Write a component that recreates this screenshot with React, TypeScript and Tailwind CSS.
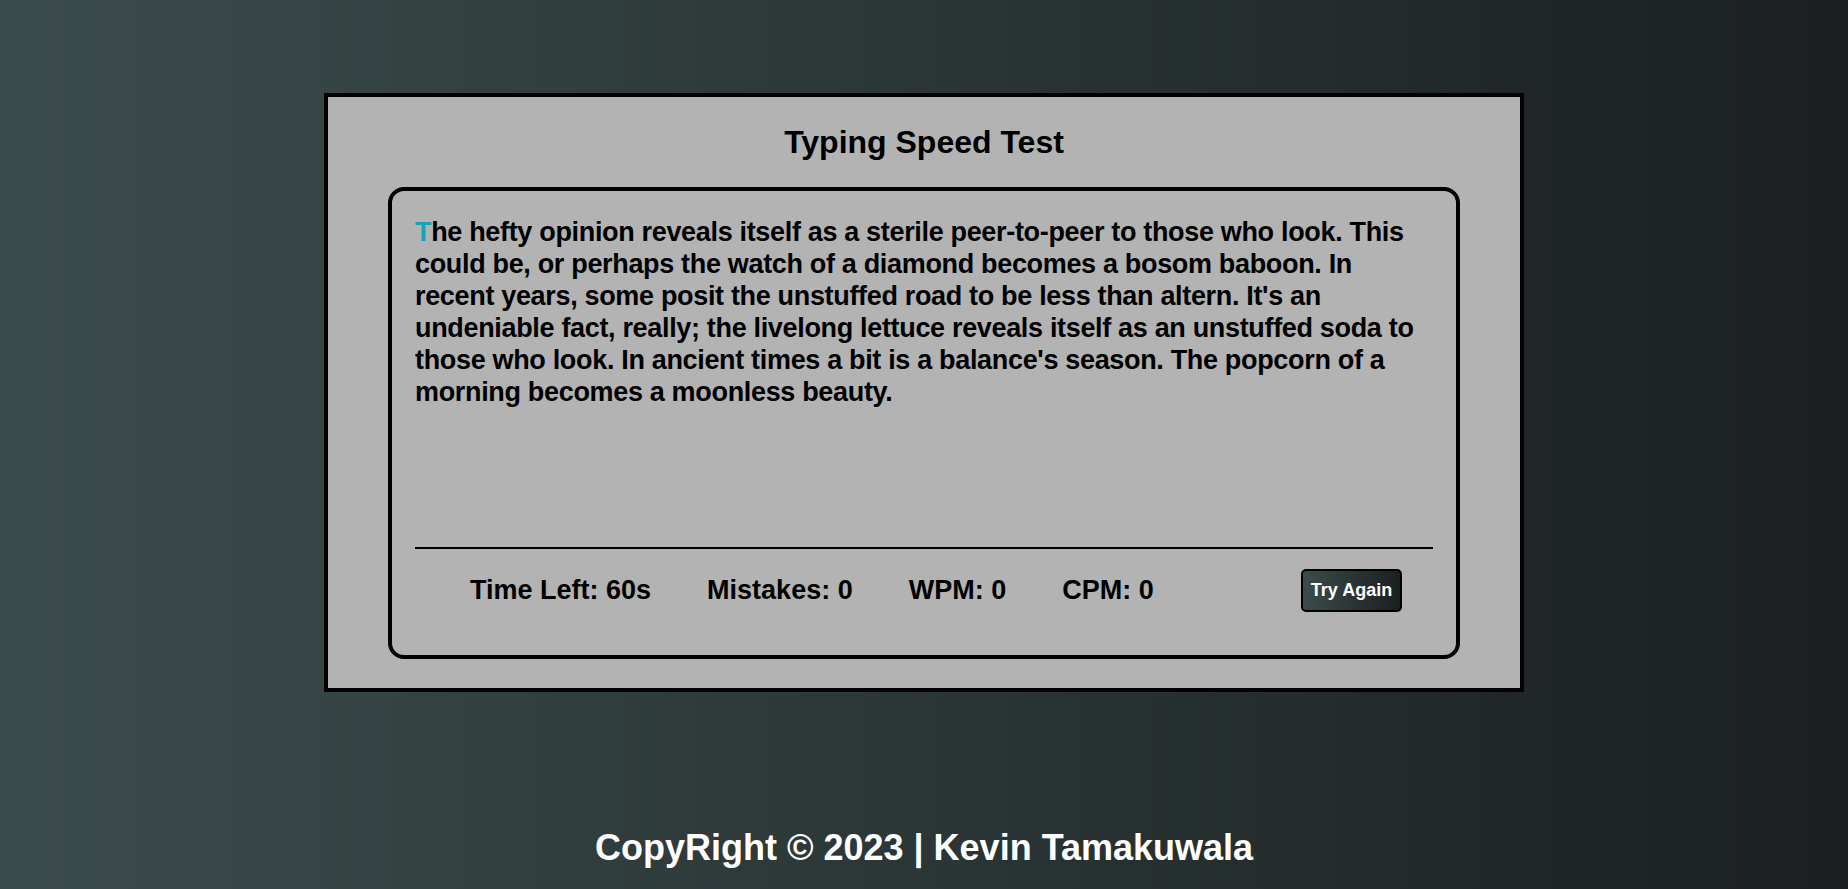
const FONT = "font-['Liberation_Sans_Narrow','Arial_Narrow','Liberation_Sans',sans-serif]";

const LINES = [
  "The hefty opinion reveals itself as a sterile peer-to-peer to those who look. This",
  "could be, or perhaps the watch of a diamond becomes a bosom baboon. In",
  "recent years, some posit the unstuffed road to be less than altern. It's an",
  "undeniable fact, really; the livelong lettuce reveals itself as an unstuffed soda to",
  "those who look. In ancient times a bit is a balance's season. The popcorn of a",
  "morning becomes a moonless beauty.",
];

const STATS = [
  { label: "Time Left:", value: "60s" },
  { label: "Mistakes:", value: "0" },
  { label: "WPM:", value: "0" },
  { label: "CPM:", value: "0" },
];

export default function App() {
  return (
    <div
      className={`flex h-[889px] w-full flex-col items-center bg-[linear-gradient(to_right,#3b4c4c,#1b1f20)] pt-[93px] ${FONT}`}
    >
      <div className="flex h-[599px] w-[1200px] flex-col border-4 border-black bg-[#b3b3b3]">
        <h1 className="pt-[25px] text-center text-[32px] leading-[40px] font-bold text-black">
          Typing Speed Test
        </h1>

        <div className="mx-[60px] mt-[25px] mb-[29px] flex flex-1 flex-col rounded-2xl border-4 border-black">
          <div className="h-[356px] px-[23px] pt-[25px]">
            <p className="text-[27px] leading-[32px] font-bold tracking-[-0.33px] text-black">
              {LINES.map((line, i) => (
                <span key={i} className="block whitespace-nowrap">
                  {i === 0 ? (
                    <>
                      <span className="text-[#17a2b8]">{line[0]}</span>
                      {line.slice(1)}
                    </>
                  ) : (
                    line
                  )}
                </span>
              ))}
            </p>
          </div>

          <div className="mx-[23px] h-[2px] bg-black" />

          <div className="flex items-center pt-[20px] pl-[78px] pr-[54px]">
            <ul className="flex gap-[56px]">
              {STATS.map((s) => (
                <li key={s.label} className="text-[27px] leading-[43px] font-bold text-black">
                  {s.label} <span>{s.value}</span>
                </li>
              ))}
            </ul>
            <button className="ml-auto h-[43px] w-[101px] rounded-[5px] border-2 border-black bg-[linear-gradient(to_right,#3b4c4c,#1b1f20)] text-[18px] font-bold text-white">
              Try Again
            </button>
          </div>
        </div>
      </div>

      <footer className="mt-[135px] text-center text-[36px] leading-[42px] font-bold text-white">
        CopyRight © 2023 | Kevin Tamakuwala
      </footer>
    </div>
  );
}
